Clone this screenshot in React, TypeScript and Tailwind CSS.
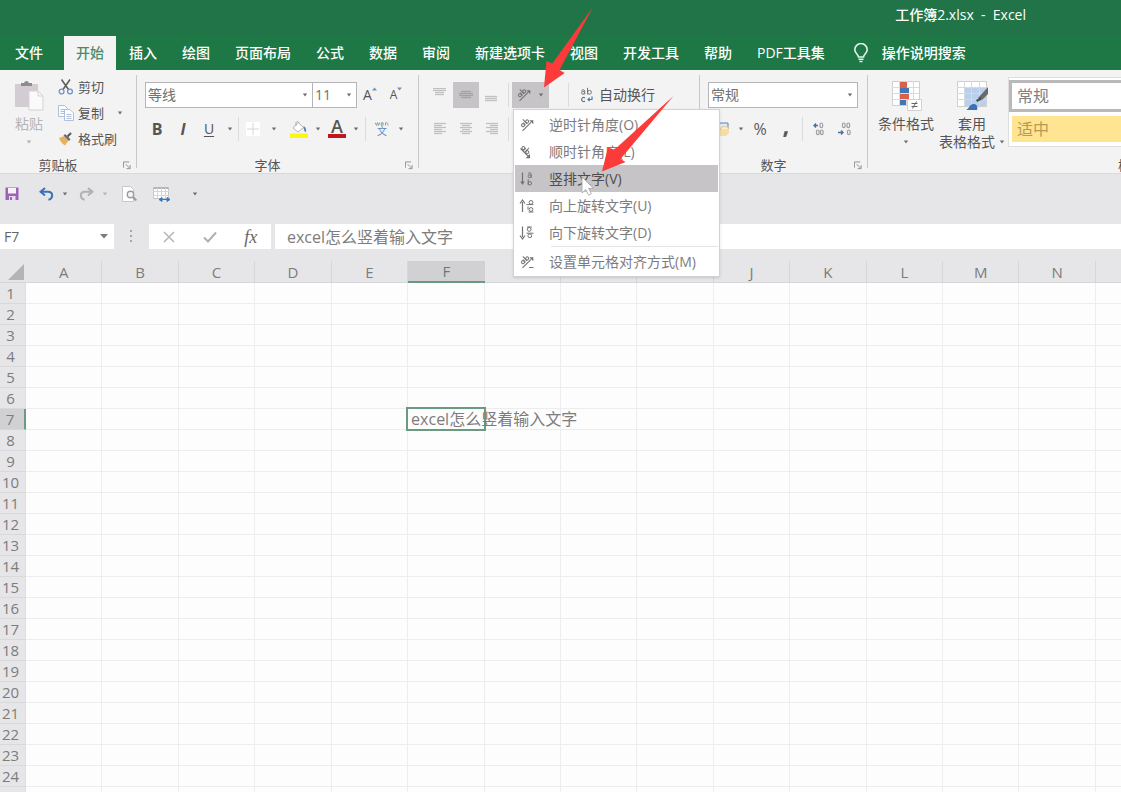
import React from "react";

const FONT = "font-['Open_Sans','Noto_Sans_CJK_SC',sans-serif]";

function Caret({ className = "" }: { className?: string }) {
  return (
    <svg viewBox="0 0 6 4" className={"h-1 w-1.5 shrink-0 " + className} fill="#6f6f6f" aria-hidden="true">
      <path d="M.8.5h4.4L3 3.4z" />
    </svg>
  );
}

function CaretButton({ label, className = "w-3" }: { label: string; className?: string }) {
  return (
    <button aria-label={label} className={"flex h-[26px] items-center justify-center " + className}>
      <Caret />
    </button>
  );
}

function ToolButton({ label, active = false, children }: { label: string; active?: boolean; children: React.ReactNode }) {
  return (
    <button
      aria-label={label}
      className={"flex h-[26px] w-[26px] shrink-0 items-center justify-center " + (active ? "bg-[#c6c4c7]" : "")}
    >
      {children}
    </button>
  );
}

function Divider({ className = "" }: { className?: string }) {
  return <div className={"h-6 w-px shrink-0 bg-[#dcdcde] " + className} />;
}

function GroupDivider() {
  return <div className="my-[5px] w-px shrink-0 bg-[#c9c9cb]" />;
}

function GroupLabel({ text }: { text: string }) {
  return (
    <div className="flex h-4 items-center pr-[5px]">
      <span className="flex-1 text-center text-[13px] leading-4 text-[#555]">{text}</span>
      <button aria-label={text + "设置"} className="ml-[7px]">
        <svg viewBox="0 0 9 9" className="h-[9px] w-2" fill="none" stroke="#8a8a8a" aria-hidden="true">
          <path d="M.5 7V.5H7M3 3l4.5 4.5M8 4v4H4" />
        </svg>
      </button>
    </div>
  );
}

function Combo({ label, value, className }: { label: string; value: string; className: string }) {
  return (
    <div className={"relative h-[26px] " + className}>
      <select
        aria-label={label}
        className="h-full w-full appearance-none rounded-none border border-[#b5b5b7] bg-white pl-0.5 text-sm text-[#707070] outline-none"
      >
        <option>{value}</option>
      </select>
      <Caret className="pointer-events-none absolute top-[11px] right-[5px]" />
    </div>
  );
}

type Mode = "ccw" | "cw" | "vertical" | "up" | "down" | "format";

function OrientIcon({ mode }: { mode: Mode }) {
  const ab = (
    <>
      <circle cx="1.8" cy="4.8" r="1.5" />
      <path d="M3.6 3v3.6" />
      <path d="M5.6.4v6.2" />
      <circle cx="7.4" cy="4.8" r="1.5" />
    </>
  );
  return (
    <svg viewBox="0 0 16 16" className="h-4 w-4 shrink-0" fill="none" stroke="#727272" aria-hidden="true">
      {(mode === "ccw" || mode === "format") && (
        <>
          <g transform="translate(-.6 5.800) rotate(-42)">{ab}</g>
          <path d="M3.500 13.800L12 5.300" strokeWidth="1.100" />
          <path d="M10.300 3.200h4v4z" fill="#727272" stroke="none" />
          {mode === "format" && <path d="M10 13.500h4.500" />}
        </>
      )}
      {mode === "cw" && (
        <>
          <g transform="translate(6.500 -.5) rotate(45)">{ab}</g>
          <path d="M1.500 4.500l7.800 7.800" strokeWidth="1.100" />
          <path d="M11 9.800v4.400H6.600z" fill="#727272" stroke="none" />
        </>
      )}
      {mode === "vertical" && (
        <>
          <path d="M3.500 1.500v10.500" strokeWidth="1.200" />
          <path d="M1.200 10.500h4.600L3.500 14z" fill="#727272" stroke="none" />
          <path d="M9.200 2.400c1-.9 3-.8 3 .8v3.600" />
          <circle cx="10.600" cy="5.200" r="1.500" />
          <path d="M9.200 8.200v6" />
          <circle cx="10.900" cy="12.300" r="1.700" />
        </>
      )}
      {mode === "up" && (
        <>
          <path d="M3.500 14V4M1 5.500L3.500 2 6 5.500" strokeWidth="1.200" />
          <path d="M7.500 6.600h6.800M9.500 14h5" />
          <circle cx="12" cy="4.400" r="1.900" />
          <circle cx="12" cy="11.500" r="1.900" />
          <path d="M9 8.600v3" />
        </>
      )}
      {mode === "down" && (
        <>
          <path d="M3.500 1.500V12M1 10.500L3.500 14 6 10.500" strokeWidth="1.200" />
          <path d="M8 2h4.800M7.500 8.200h7" />
          <circle cx="10.200" cy="4.400" r="1.900" />
          <circle cx="10.800" cy="10.800" r="1.900" />
        </>
      )}
    </svg>
  );
}

function Lines({ rows, dark = false }: { rows: [number, number, number][]; dark?: boolean }) {
  return (
    <svg viewBox="0 0 14 14" className="h-3.5 w-3.5" stroke={dark ? "#a2a1a4" : "#c0c0c2"} strokeWidth="1.3" aria-hidden="true">
      {rows.map(([x1, x2, y]) => (
        <path key={y} d={`M${x1} ${y}H${x2}`} />
      ))}
    </svg>
  );
}

const MENU: { mode: Mode; text: string }[] = [
  { mode: "ccw", text: "逆时针角度(O)" },
  { mode: "cw", text: "顺时针角度(L)" },
  { mode: "vertical", text: "竖排文字(V)" },
  { mode: "up", text: "向上旋转文字(U)" },
  { mode: "down", text: "向下旋转文字(D)" },
  { mode: "format", text: "设置单元格对齐方式(M)" },
];

function OrientationMenu() {
  return (
    <div
      role="menu"
      className="absolute top-[27px] left-px z-20 w-[207px] border border-[#d2d2d4] bg-white p-px shadow-sm"
    >
      {MENU.map(({ mode, text }) => (
        <React.Fragment key={mode}>
          {mode === "format" && <div className="mb-px ml-9 h-px bg-[#e4e4e6]" />}
          <button
            role="menuitem"
            className={
              "flex h-[27px] w-full items-center gap-[14px] pl-1 text-sm leading-4 whitespace-nowrap " +
              (mode === "vertical" ? "bg-[#c6c4c7] text-[#4e4e4e]" : "text-[#7c7c7c]")
            }
          >
            <OrientIcon mode={mode} />
            {text}
          </button>
        </React.Fragment>
      ))}
    </div>
  );
}

const TABS = ["开始", "插入", "绘图", "页面布局", "公式", "数据", "审阅", "新建选项卡", "视图", "开发工具", "帮助", "PDF工具集"];

function Header() {
  return (
    <header className="shrink-0 bg-[#217447] text-sm text-white">
      <div className="flex h-9 items-center justify-end pr-[95px] pb-1.5 font-medium whitespace-pre">
        {"工作簿2.xlsx  -  Excel"}
      </div>
      <nav className="flex h-[34px] gap-px bg-[#1d7846] whitespace-nowrap">
        <button className="w-[63px] pl-[15px] text-left font-medium">文件</button>
        {TABS.map((t, i) => (
          <button key={t} className={"px-3 font-medium " + (i === 0 ? "bg-[#f3f3f3] text-[#4a8c69]" : "")}>
            {t}
          </button>
        ))}
        <button className="ml-[15px] flex items-center gap-[13px] font-medium">
          <svg viewBox="0 0 16 20" className="h-5 w-4" fill="none" stroke="#e3f3e9" strokeWidth="1.6" aria-hidden="true">
            <path d="M5.5 14c0-2.6-3.7-3.6-3.7-7.3a6.2 6.2 0 0 1 12.4 0c0 3.7-3.7 4.7-3.7 7.3z" />
            <path d="M5.5 16.3h5M6.5 18.5h3" />
          </svg>
          操作说明搜索
        </button>
      </nav>
    </header>
  );
}

function ClipboardGroup() {
  return (
    <section aria-label="剪贴板" className="flex w-[136px] shrink-0 flex-col pt-1">
      <div className="flex h-[83px]">
        <button className="flex w-[58px] flex-col items-center pt-1.5 text-sm leading-4 text-[#b5b5b7]">
          <svg viewBox="0 0 30 32" className="mb-1 h-8 w-[30px]" aria-hidden="true">
            <path d="M1 4h23v23H1z" fill="#d3cdd3" />
            <path d="M7 6V3h3a2.6 2.6 0 0 1 5 0h3v3z" fill="#8f8c90" />
            <path d="M15 11h9l5 5v14H15z" fill="#fafafa" stroke="#d5d2d5" />
            <path d="M24 11v5h5" fill="none" stroke="#d5d2d5" />
          </svg>
          粘贴
          <Caret className="mt-2 opacity-50" />
        </button>
        <div className="flex flex-col text-[13px] leading-4 text-[#555]">
          <button className="flex h-[26px] items-center gap-1">
            <svg viewBox="0 0 16 16" className="h-4 w-4" fill="none" aria-hidden="true">
              <path d="M3.5.5l7 10M12 .5l-7 10" stroke="#5a5a5a" strokeWidth="1.5" />
              <circle cx="3.6" cy="12.5" r="2.4" stroke="#6d93c8" strokeWidth="1.3" />
              <circle cx="12" cy="12.5" r="2.4" stroke="#6d93c8" strokeWidth="1.3" />
            </svg>
            剪切
          </button>
          <div className="flex h-[26px] items-center">
            <button className="flex items-center gap-1">
              <svg viewBox="0 0 16 16" className="h-4 w-4" fill="#fbfcff" stroke="#afc0dc" aria-hidden="true">
                <path d="M.5.5h6l3 3v8h-9z" />
                <path d="M2.5 4.5h4M2.5 6.5h4M2.5 8.5h4" />
                <path d="M6.5 4.5H12l3.5 3.5v7.5h-9z" />
                <path d="M8.5 9.5h5M8.5 11.5h5M8.5 13.5h5" />
              </svg>
              复制
            </button>
            <CaretButton label="复制选项" className="ml-2.5 w-3" />
          </div>
          <button className="flex h-[26px] items-center gap-1">
            <svg viewBox="0 0 16 16" className="h-4 w-4" aria-hidden="true">
              <path d="M1 7l5-2 4.5 4.5L7 14.5C4.500 13 2.500 11 1 7z" fill="#e8b15c" />
              <path d="M5.500 4.500L11 10l1.500-1.700-5.400-5.300z" fill="#6b6b6b" />
              <path d="M9.500 5.500L13 2" stroke="#5a5a5a" strokeWidth="2.2" />
            </svg>
            格式刷
          </button>
        </div>
      </div>
      <GroupLabel text="剪贴板" />
    </section>
  );
}

function FontGroup() {
  return (
    <section aria-label="字体" className="flex w-[281px] shrink-0 flex-col pt-3 text-[#555]">
      <div className="flex pl-2">
        <Combo label="字体" value="等线" className="w-[168px]" />
        <Combo label="字号" value="11" className="-ml-px w-[45px]" />
        <ToolButton label="增大字号">
          <span className="text-sm">A</span>
          <svg viewBox="0 0 5 4" className="mb-3 h-1 w-[5px]" fill="#7c8fb0" aria-hidden="true"><path d="M0 3.500L2.500.5 5 3.500z" /></svg>
        </ToolButton>
        <ToolButton label="减小字号">
          <span className="text-xs">A</span>
          <svg viewBox="0 0 5 4" className="mb-3 h-1 w-[5px]" fill="#7c8fb0" aria-hidden="true"><path d="M0 .5h5L2.500 3.500z" /></svg>
        </ToolButton>
      </div>
      <div className="mt-2 mb-[15px] flex items-center pl-[7px]">
        <ToolButton label="加粗"><b className="text-base">B</b></ToolButton>
        <ToolButton label="倾斜"><b className="text-base italic">I</b></ToolButton>
        <ToolButton label="下划线"><span className="text-sm underline underline-offset-2">U</span></ToolButton>
        <CaretButton label="下划线选项" className="w-4" />
        <Divider className="mr-px" />
        <ToolButton label="边框">
          <svg viewBox="0 0 14 14" className="h-3.5 w-3.5" aria-hidden="true">
            <path d="M0 0h14v14H0z" fill="#fff" />
            <path d="M7 1v12M1 7h12" stroke="#d6d6d8" />
          </svg>
        </ToolButton>
        <CaretButton label="边框选项" className="w-4" />
        <span className="w-1" />
        <ToolButton label="填充颜色">
          <svg viewBox="0 0 20 18" className="h-[18px] w-5" aria-hidden="true">
            <path d="M9 2.500l5.500 5L9 12 4 8z" fill="#fff" stroke="#b4b4b6" />
            <path d="M7 6V2.500a1.700 1.700 0 0 1 3 0" fill="none" stroke="#a8a8aa" />
            <path d="M14.500 6c2.500 1.200 3 3.500 2.500 6-1.500 0-2.500-2-2.500-6z" fill="#5b84bd" />
            <path d="M1 13.500h18V18H1z" fill="#fbf612" />
          </svg>
        </ToolButton>
        <CaretButton label="填充颜色选项" />
        <ToolButton label="字体颜色">
          <span className="h-[18px] border-b-4 border-[#c3161c] px-[3px] text-lg leading-[13px] font-semibold">A</span>
        </ToolButton>
        <CaretButton label="字体颜色选项" />
        <Divider className="mx-[3px]" />
        <ToolButton label="拼音指南">
          <span className="flex flex-col items-center text-[10px] leading-[11px] text-[#5f86c0]">
            <svg viewBox="0 0 14 5" className="h-[5px] w-3.5" fill="none" stroke="#9a9a9a" aria-hidden="true">
              <path d="M0 1.500l1.500 3 1-3 1 3 1.200-3M6 3h2.500c0-2-2.500-2-2.500 0s2 2 2.500 1M10.500 4.500v-3M10.500 2.500c1-1.500 2.500-1 2.500 2" />
            </svg>
            文
          </span>
        </ToolButton>
        <CaretButton label="拼音指南选项" />
      </div>
      <GroupLabel text="字体" />
    </section>
  );
}

function AlignGroup() {
  return (
    <section aria-label="对齐" className="flex w-[280px] shrink-0 flex-col pt-3">
      <div className="flex items-center pl-2">
        <ToolButton label="顶端对齐"><Lines rows={[[0, 13, 0.5], [0, 13, 2.5], [2, 11, 4.5], [2, 11, 6.5]]} /></ToolButton>
        <ToolButton label="垂直居中" active><Lines dark rows={[[2, 12, 3.5], [0, 14, 5.5], [0, 14, 7.5], [2, 12, 9.5]]} /></ToolButton>
        <ToolButton label="底端对齐"><Lines rows={[[0, 12, 8.5], [0, 12, 10.5], [0, 12, 12.5]]} /></ToolButton>
        <Divider className="mx-[3px]" />
        <div className="relative">
          <button aria-label="方向" aria-haspopup="menu" aria-expanded="true" className="flex h-[26px] w-[37px] items-center gap-1.5 bg-[#c6c4c7] pl-1">
            <OrientIcon mode="ccw" />
            <Caret />
          </button>
          <OrientationMenu />
        </div>
        <Divider className="mr-[11px] ml-[19px]" />
        <button className="flex items-center gap-[5px] text-sm whitespace-nowrap text-[#555]">
          <svg viewBox="0 0 14 16" className="h-4 w-3.5" fill="none" stroke="#777" aria-hidden="true">
            <path d="M1.500 3.300c1-.9 3.200-.8 3.200.8v3.300" />
            <circle cx="3" cy="5.700" r="1.500" />
            <path d="M7.500.8v6.600" />
            <circle cx="9.500" cy="5.300" r="1.900" />
            <path d="M5 11a2 2 0 1 0 0 3" strokeWidth="1.200" />
            <path d="M12 9.500v3H8M9.700 10.800L8 12.500l1.700 1.700" stroke="#3f78bd" strokeWidth="1.200" />
          </svg>
          自动换行
        </button>
      </div>
      <div className="mt-2 flex items-center pl-2">
        <ToolButton label="左对齐"><Lines rows={[[1, 13, 1.5], [1, 9, 3.5], [1, 13, 5.5], [1, 9, 7.5], [1, 13, 9.5], [1, 9, 11.5]]} /></ToolButton>
        <ToolButton label="居中"><Lines rows={[[1, 13, 1.5], [3, 11, 3.5], [1, 13, 5.5], [3, 11, 7.5], [1, 13, 9.5], [3, 11, 11.5]]} /></ToolButton>
        <ToolButton label="右对齐"><Lines rows={[[1, 13, 1.5], [5, 13, 3.5], [1, 13, 5.5], [5, 13, 7.5], [1, 13, 9.5], [5, 13, 11.5]]} /></ToolButton>
        <Divider className="mx-[3px]" />
      </div>
    </section>
  );
}

function DecimalIcon({ add }: { add: boolean }) {
  return (
    <svg viewBox="0 0 14 14" className="h-3.5 w-3.5" fill="none" stroke="#a0a0a2" strokeWidth="1.2" aria-hidden="true">
      {add ? (
        <>
          <path d="M6 3.500H2M4 1.500l-2 2 2 2" stroke="#4d6fa8" strokeWidth="1.4" />
          <rect x="8" y="1" width="2.600" height="4.600" rx="1.300" />
          <rect x="4.500" y="8" width="2.600" height="4.600" rx="1.300" />
          <rect x="8.500" y="8" width="2.600" height="4.600" rx="1.300" />
        </>
      ) : (
        <>
          <rect x="4.500" y="1" width="2.600" height="4.600" rx="1.300" />
          <rect x="9" y="1" width="2.600" height="4.600" rx="1.300" />
          <path d="M0 10.500h5M3 8.500l2 2-2 2" stroke="#4d6fa8" strokeWidth="1.4" />
          <rect x="9.500" y="8" width="2.600" height="4.600" rx="1.300" />
        </>
      )}
    </svg>
  );
}

function NumberGroup() {
  return (
    <section aria-label="数字" className="flex w-[167px] shrink-0 flex-col pt-3 text-[#5a5a5a]">
      <div className="flex pl-2"><Combo label="数字格式" value="常规" className="w-[150px]" /></div>
      <div className="mt-2 mb-[15px] flex items-center pl-[9px]">
        <ToolButton label="会计数字格式">
          <svg viewBox="0 0 16 16" className="h-4 w-4" aria-hidden="true">
            <path d="M1 2h13v6H1z" fill="#dfe9f6" stroke="#5b84bd" />
            <ellipse cx="10.500" cy="7.500" rx="4" ry="2" fill="#fdebc5" stroke="#e6c88d" />
            <path d="M7 8.500h8V12l-3 3H5v-4z" fill="#f6dcA6" />
          </svg>
        </ToolButton>
        <CaretButton label="会计格式选项" />
        <ToolButton label="百分比样式"><span className="text-base">%</span></ToolButton>
        <ToolButton label="千位分隔样式"><b className="pb-2 text-2xl leading-4">,</b></ToolButton>
        <Divider className="mx-[3px]" />
        <ToolButton label="增加小数位数"><DecimalIcon add /></ToolButton>
        <ToolButton label="减少小数位数"><DecimalIcon add={false} /></ToolButton>
      </div>
      <GroupLabel text="数字" />
    </section>
  );
}

function StylesGroup() {
  return (
    <section aria-label="样式" className="flex min-w-0 flex-1 flex-col overflow-hidden pl-1">
      <div className="flex h-[87px] text-sm leading-4 text-[#555]">
        <button className="flex w-[68px] shrink-0 flex-col items-center pt-2.5 whitespace-nowrap">
          <svg viewBox="0 0 32 32" className="mb-1 h-8 w-8" aria-hidden="true">
            <path d="M2.500 1.500h27v24h-27z" fill="#fff" stroke="#cfcfd1" />
            <path d="M2 7.500h27M2 13.500h27M2 19.500h27M9.500 1v24M16.500 1v24M23.500 1v24" stroke="#dadadc" />
            <path d="M10 2h7v6h-7zM10 14h9v5h-9z" fill="#d9604c" />
            <path d="M10 8h9v5h-9zM10 20h6v5h-6z" fill="#3f78b5" />
            <path d="M17.500 19.500h14v11h-14z" fill="#fff" stroke="#d2d2d4" />
            <path d="M21.500 23.500h6M21.500 26.500h6M26.500 21.500l-4 7" stroke="#666" />
          </svg>
          条件格式
          <Caret className="mt-2" />
        </button>
        <button className="flex w-16 shrink-0 flex-col items-center pt-2.5 whitespace-nowrap">
          <svg viewBox="0 0 32 32" className="mb-1 h-8 w-8" aria-hidden="true">
            <path d="M1.500 1.500h29v25h-29z" fill="#fff" stroke="#cfcfd1" />
            <path d="M9 8h21v18H9z" fill="#b9cfeb" />
            <path d="M1 7.500h30M1 13.500h30M1 19.500h30M8.500 1v25M15.500 1v25M23.500 1v25" stroke="#d4d9e2" />
            <path d="M32 7v7l-6 6-4-2z" fill="#6a6a6a" />
            <path d="M25 17l-5 3 1 2 4-2z" fill="#4d4d4d" />
            <path d="M10 30c3-1 3-5 7-6 4-.5 5 3 4 6z" fill="#3a72b4" />
          </svg>
          套用
          <span className="mt-0.5 flex items-center gap-1">
            表格格式
            <Caret />
          </span>
        </button>
        <div className="mt-[7px] ml-1 flex h-[70px] min-w-0 flex-1 flex-col gap-1 border border-r-0 border-[#dededf] bg-white pt-0.5 text-base leading-5">
          <button className="flex h-8 shrink-0 items-center border-[3px] border-r-0 border-[#b9b9bb] pl-[5px] text-[#808080]">常规</button>
          <button className="ml-[3px] flex h-[26px] shrink-0 items-center bg-[#ffe591] pl-[5px] text-[#b59a58]">适中</button>
        </div>
      </div>
      <div className="w-[3px] self-end overflow-hidden text-[13px] leading-4 whitespace-nowrap text-[#555]">样式</div>
    </section>
  );
}

function QuickAccess() {
  return (
    <div className="flex h-10 shrink-0 items-center pl-[5px]">
      <button aria-label="保存">
        <svg viewBox="0 0 14 14" className="h-3.5 w-3.5" aria-hidden="true">
          <path d="M.5.5h13v12.500H.5z" fill="#9d63ba" />
          <path d="M3 1h8v5.500H3z" fill="#f6f2f8" />
          <path d="M4 9h6.500v4H4z" fill="#e9dcf0" />
          <path d="M5 10h2v3H5z" fill="#9d63ba" />
        </svg>
      </button>
      <button aria-label="撤消" className="ml-5">
        <svg viewBox="0 0 15 14" className="h-3.5 w-[15px]" fill="none" stroke="#3c72b5" strokeWidth="2" aria-hidden="true">
          <path d="M6 1L1.500 4.800 6 8.600M2 4.800h7c5.500.2 5.500 6.500.5 8" />
        </svg>
      </button>
      <CaretButton label="撤消选项" className="ml-[5px] w-3" />
      <button aria-label="恢复" className="ml-2">
        <svg viewBox="0 0 15 14" className="h-3.5 w-[15px]" fill="none" stroke="#b1b1b3" strokeWidth="2" aria-hidden="true">
          <path d="M9 1l4.500 3.800L9 8.600M13 4.800H6C.5 5 .5 11.300 5.500 12.800" />
        </svg>
      </button>
      <CaretButton label="恢复选项" className="ml-[5px] w-3 opacity-40" />
      <button aria-label="打印预览" className="ml-2.5">
        <svg viewBox="0 0 16 16" className="h-4 w-4" aria-hidden="true">
          <path d="M1.500.5h8l3 3v12h-11z" fill="#fff" stroke="#c8c8ca" />
          <circle cx="9.500" cy="8.500" r="3.200" fill="#f4f4f4" stroke="#9c9c9e" strokeWidth="1.4" />
          <path d="M12 11l3.300 3.500" stroke="#9c9c9e" strokeWidth="2" />
        </svg>
      </button>
      <button aria-label="列宽" className="ml-4">
        <svg viewBox="0 0 18 17" className="h-[17px] w-[18px]" aria-hidden="true">
          <path d="M.5 1.500h15v11H.5z" fill="#fff" stroke="#c6c6c8" />
          <path d="M.5 2h15" stroke="#b4b4b6" strokeWidth="2" />
          <path d="M0 5.500h16M0 9.500h16M4.500 2v10M8.500 2v10M12.500 2v10" stroke="#d6d6d8" />
          <path d="M7 13.500h9M9 11.500l-3 2L9 15.500zM14 11.500l3 2-3 2z" fill="#3f78b5" stroke="#3f78b5" />
        </svg>
      </button>
      <CaretButton label="自定义快速访问工具栏" className="ml-[18px] w-3" />
    </div>
  );
}

function FormulaBar() {
  return (
    <div className="mt-2.5 mb-3 flex h-[25px] shrink-0 items-stretch">
      <div className="relative w-[114px] shrink-0">
        <input aria-label="名称框" defaultValue="F7" className="h-full w-full bg-white pl-1 text-sm text-[#666] outline-none" />
        <svg viewBox="0 0 8 5" className="pointer-events-none absolute top-2.5 right-1.5 h-[5px] w-2" fill="#7a7a7a" aria-hidden="true"><path d="M0 0h8L4 4.500z" /></svg>
      </div>
      <svg viewBox="0 0 3 15" className="mx-4 my-[5px] h-[15px] w-[3px] shrink-0" fill="#a5a5a7" aria-hidden="true">
        <path d="M0 1h2v2H0zM0 6h2v2H0zM0 11h2v2H0z" />
      </svg>
      <div className="flex w-[122px] shrink-0 bg-white">
        <button aria-label="取消" className="flex flex-1 items-center justify-center">
          <svg viewBox="0 0 12 12" className="h-3 w-3" stroke="#b5b5b7" strokeWidth="1.5" aria-hidden="true"><path d="M1 1l10 10M11 1L1 11" /></svg>
        </button>
        <button aria-label="输入" className="flex flex-1 items-center justify-center">
          <svg viewBox="0 0 14 12" className="h-3 w-3.5" fill="none" stroke="#b0b0b2" strokeWidth="2" aria-hidden="true"><path d="M1 6.500l4 4L13 1.500" /></svg>
        </button>
        <button className="flex-1 font-['Liberation_Serif',serif] text-lg leading-5 text-[#666] italic">fx</button>
      </div>
      <input
        aria-label="编辑栏"
        defaultValue="excel怎么竖着输入文字"
        className="ml-1 min-w-0 flex-1 bg-white pl-3 text-base text-[#7c7c7c] outline-none"
      />
    </div>
  );
}

const COLS = "ABCDEFGHIJKLMN".split("");
const COVERED = ["G", "H", "I"];
const ROWS = Array.from({ length: 24 }, (_, i) => i + 1);

function Sheet() {
  return (
    <div className="min-h-0 flex-1 overflow-hidden bg-[#fdfdfe]">
      <table className="w-full table-fixed border-separate border-spacing-0 text-[15px] leading-5 text-[#7c7c7c]">
        <colgroup>
          <col className="w-[26px]" />
          {COLS.map((c) => <col key={c} />)}
          <col className="w-[25px]" />
        </colgroup>
        <thead>
          <tr className="h-[21px] bg-[#e6e6e8]">
            <th className="border-b border-[#d6d6d8] p-0">
              <svg viewBox="0 0 26 20" className="h-5 w-full" fill="#b4b4b6" aria-hidden="true"><path d="M24 2v16H8z" /></svg>
            </th>
            {COLS.map((c) => (
              <th
                key={c}
                scope="col"
                aria-label={c}
                className={
                  "p-0 text-center font-normal " +
                  (c === "F" ? "border-b-2 border-[#6b9a82] bg-[#d1d1d3] text-[#5f8270]" : "border-r border-b border-[#d6d6d8]")
                }
              >
                {COVERED.includes(c) ? null : c}
              </th>
            ))}
            <th className="border-b border-[#d6d6d8] p-0" />
          </tr>
        </thead>
        <tbody>
          {ROWS.map((r) => (
            <tr key={r} className="h-[21px]">
              <th
                scope="row"
                className={
                  "p-0 pr-1 text-center font-normal " +
                  (r === 7
                    ? "border-r-2 border-b border-r-[#6b9a82] border-b-[#d6d6d8] bg-[#d1d1d3]"
                    : "border-r border-b border-r-[#dedee0] border-b-[#d9d9db] bg-[#e6e6e8]")
                }
              >
                {r}
              </th>
              {COLS.map((c) =>
                r === 7 && c === "F" ? (
                  <td key={c} className="relative border-r border-b border-[#ededef] p-0 pl-[3px] text-base leading-5 whitespace-nowrap">
                    <span className="relative z-10">excel怎么竖着输入文字</span>
                    <span className="absolute -top-[2px] -right-[2px] -bottom-[2px] -left-[2px] border-2 border-[#6b9a82]" />
                  </td>
                ) : (
                  <td key={c} className="border-r border-b border-[#ededef] p-0" />
                )
              )}
              <td className="border-b border-[#ededef] p-0" />
            </tr>
          ))}
          <tr className="h-[21px]">
            <td className="border-r border-[#dedee0] bg-[#e6e6e8] p-0" />
            {COLS.map((c) => <td key={c} className="border-r border-[#ededef] p-0" />)}
            <td className="p-0" />
          </tr>
        </tbody>
      </table>
    </div>
  );
}

function Annotations() {
  return (
    <div className="pointer-events-none absolute top-0 left-0 z-30" aria-hidden="true">
      <svg viewBox="0 0 700 210" className="h-[210px] w-[700px]">
        <path d="M582 177v16l3.800-3.400 2.800 5.600 2.800-1.400-2.800-5.500h4.800z" fill="#fff" stroke="#a2a1a4" strokeWidth=".8" />
        <path d="M593 7L559.500 70l5.200 3-20.700 14.500 2.500-26.500 5.800 2.500z" fill="#fb3b3a" />
        <path d="M673.500 96L620.500 159l5 3-23.500 9.500 6-24.200 5.800 3z" fill="#fb3b3a" />
      </svg>
    </div>
  );
}

export default function App() {
  return (
    <div className={"relative flex h-screen flex-col overflow-hidden bg-[#e6e6e8] " + FONT}>
      <Header />
      <div className="relative z-10 flex h-[104px] shrink-0 border-b border-[#d9d9db] bg-[#f3f3f3]">
        <ClipboardGroup />
        <GroupDivider />
        <FontGroup />
        <GroupDivider />
        <AlignGroup />
        <GroupDivider />
        <NumberGroup />
        <GroupDivider />
        <StylesGroup />
      </div>
      <QuickAccess />
      <FormulaBar />
      <Sheet />
      <Annotations />
    </div>
  );
}
